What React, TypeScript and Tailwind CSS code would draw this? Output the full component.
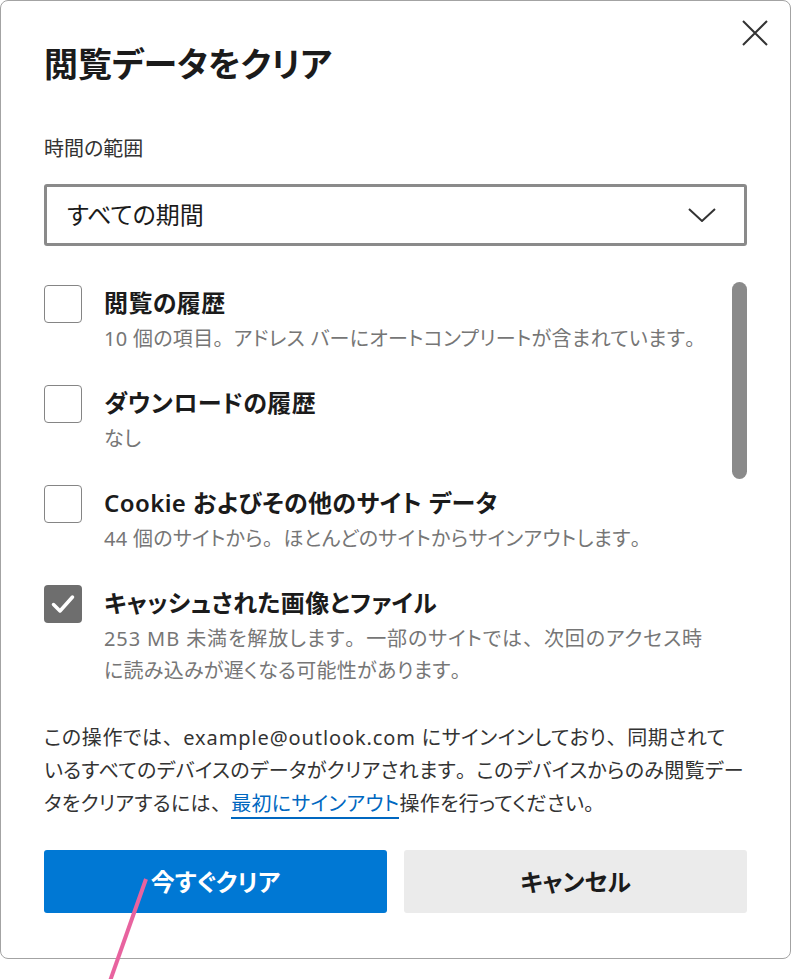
import React from "react";

const FONT = "[font-family:'Noto_Sans','Noto_Sans_CJK_JP',sans-serif] [font-feature-settings:'palt']";

// full-width punctuation keeps its normal width (no palt), like the original UI font
function Jp({ text }: { text: string }) {
  const parts = text.split(/([。、])/);
  return (
    <>
      {parts.map((p, i) =>
        p === "。" || p === "、" ? (
          <span key={i} className="[font-feature-settings:normal]">
            {p}
          </span>
        ) : (
          <React.Fragment key={i}>{p}</React.Fragment>
        )
      )}
    </>
  );
}

type Item = {
  title: string;
  lines: string[];
  checked?: boolean;
};

const items: Item[] = [
  {
    title: "閲覧の履歴",
    lines: ["10 個の項目。アドレス バーにオートコンプリートが含まれています。"],
  },
  { title: "ダウンロードの履歴", lines: ["なし"] },
  {
    title: "Cookie およびその他のサイト データ",
    lines: ["44 個のサイトから。ほとんどのサイトからサインアウトします。"],
  },
  {
    title: "キャッシュされた画像とファイル",
    lines: [
      "253 MB 未満を解放します。一部のサイトでは、次回のアクセス時",
      "に読み込みが遅くなる可能性があります。",
    ],
    checked: true,
  },
];

function Checkbox({ checked }: { checked?: boolean }) {
  if (checked) {
    return (
      <div className="flex h-[38px] w-[38px] shrink-0 items-center justify-center rounded-[4px] bg-[#6e6e6e]">
        <svg width="24" height="20" viewBox="0 0 24 20" fill="none">
          <path d="M2.5 10.5 L9 17 L21.5 3" stroke="white" strokeWidth="3.5" strokeLinecap="round" strokeLinejoin="round" />
        </svg>
      </div>
    );
  }
  return <div className="h-[38px] w-[38px] shrink-0 rounded-[4px] border-[1.5px] border-[#858585] bg-white" />;
}

function ClearItem({ item }: { item: Item }) {
  return (
    <div className="flex items-start gap-[22px]">
      <Checkbox checked={item.checked} />
      <div className="flex flex-col">
        <div className="text-[24px] font-semibold leading-[36px] tracking-[0.4px] text-[#1b1b1b]">{item.title}</div>
        <div className="pt-[2px] text-[20px] leading-[32px] tracking-[0.3px] text-[#767676]">
          {item.lines.map((l, i) => (
            <div key={l} className={i === 0 && item.lines.length > 1 ? "whitespace-nowrap tracking-[0.9px]" : "whitespace-nowrap"}>
              <Jp text={l} />
            </div>
          ))}
        </div>
      </div>
    </div>
  );
}

export default function App() {
  return (
    <div className={`relative h-[979px] w-[791px] bg-white ${FONT}`}>
      <div className="relative flex h-[959px] w-[791px] flex-col rounded-[8px] border border-[#a3a3a3] px-[43px] pt-[42px]">
        <button className="absolute right-[22px] top-[18px] flex h-[27px] w-[27px] items-center justify-center">
          <svg width="26" height="26" viewBox="0 0 26 26" fill="none">
            <path d="M1 1 L25 25 M25 1 L1 25" stroke="#333" strokeWidth="2" />
          </svg>
        </button>

        <h1 className="text-[34px] font-semibold leading-[42px] text-[#1b1b1b]">閲覧データをクリア</h1>

        <div className="mt-[50px] text-[20px] leading-[28px] text-[#333]">時間の範囲</div>

        <div className="mt-[21px] flex h-[62px] items-center justify-between rounded-[3px] border-[3px] border-[#8a8a8a] pl-[20px] pr-[28px]">
          <span className="text-[24px] leading-[32px] text-[#1b1b1b]">すべての期間</span>
          <svg width="28" height="14" viewBox="0 0 28 14" fill="none">
            <path d="M1 1 L14 13 L27 1" stroke="#333" strokeWidth="2" />
          </svg>
        </div>

        <div className="relative mt-[39px]">
          <div className="flex flex-col gap-[30px]">
            {items.map((item) => (
              <ClearItem key={item.title} item={item} />
            ))}
          </div>
          <div className="absolute right-0 top-[-3px] h-[197px] w-[15px] rounded-full bg-[#8a8a8a]" />
        </div>

        <p className="mt-[34px] whitespace-nowrap text-[20px] leading-[33px] tracking-[0.3px] text-[#333]">
          <span className="tracking-[0.6px]">
            <Jp text="この操作では、" />
            <span className="tracking-[0.9px]">example@outlook.com</span>
            <Jp text=" にサインインしており、同期されて" />
          </span>
          <br />
          <Jp text="いるすべてのデバイスのデータがクリアされます。このデバイスからのみ閲覧デー" />
          <br />
          <Jp text="タをクリアするには、" />
          <a className="border-b-2 border-[#0067c0] text-[#0067c0]">最初にサインアウト</a>
          <Jp text="操作を行ってください。" />
        </p>

        <div className="mt-[30px] grid grid-cols-2 gap-[17px]">
          <button className="h-[63px] rounded-[3px] bg-[#0078d4] text-[24px] font-semibold text-white">今すぐクリア</button>
          <button className="h-[63px] rounded-[3px] bg-[#ebebeb] text-[24px] font-semibold text-[#1b1b1b]">キャンセル</button>
        </div>
      </div>

      <svg className="pointer-events-none absolute left-0 top-0" width="791" height="979" viewBox="0 0 791 979">
        <line x1="146" y1="879" x2="110" y2="981" stroke="#e8639f" strokeWidth="4" />
      </svg>
    </div>
  );
}
